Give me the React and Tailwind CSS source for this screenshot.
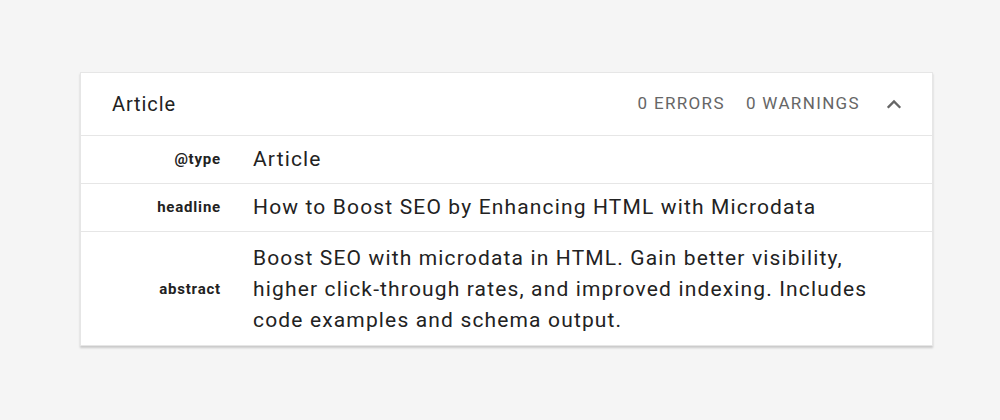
import React from "react";

const rows = [
  { label: "@type", value: "Article" },
  { label: "headline", value: "How to Boost SEO by Enhancing HTML with Microdata" },
  {
    label: "abstract",
    value:
      "Boost SEO with microdata in HTML. Gain better visibility, higher click-through rates, and improved indexing. Includes code examples and schema output.",
  },
];

export default function App() {
  return (
    <div className="w-[1000px] h-[420px] bg-[#f5f5f5] pt-[72px] pl-[80px]" style={{ fontFamily: "Roboto, 'Noto Sans', sans-serif" }}>
      <div className="w-[853px] bg-white border border-[#e6e6e6] shadow-[0_2px_2px_rgba(0,0,0,0.18)]">
        <div className="h-[63px] flex items-center pl-[31px] pr-[28px] border-b border-[#e6e6e6]">
          <div className="text-[20px] text-[#222] flex-1 tracking-[0.9px]">Article</div>
          <div className="text-[17px] text-[#666] tracking-[1.35px] flex items-center gap-[21px]">
            <span>0 ERRORS</span>
            <span>0 WARNINGS</span>
          </div>
          <svg className="ml-[24px]" width="20" height="20" viewBox="0 0 24 24" fill="none">
            <path d="M5.5 15.5l6.5-6.5 6.5 6.5" stroke="#666" strokeWidth="2.8" strokeLinecap="square" />
          </svg>
        </div>
        {rows.map((r, i) => (
          <div
            key={r.label}
            className={`flex items-center ${i < rows.length - 1 ? "border-b border-[#e6e6e6]" : ""} ${i === 2 ? "pt-[11px] pb-[9px]" : "min-h-[48px]"}`}
          >
            <div className="w-[140px] text-right text-[15px] tracking-[0.8px] font-bold text-[#222] shrink-0">{r.label}</div>
            <div className="ml-[32px] w-[620px] text-[21px] tracking-[1.15px] leading-[31px] text-[#222]">{r.value}</div>
          </div>
        ))}
      </div>
    </div>
  );
}
